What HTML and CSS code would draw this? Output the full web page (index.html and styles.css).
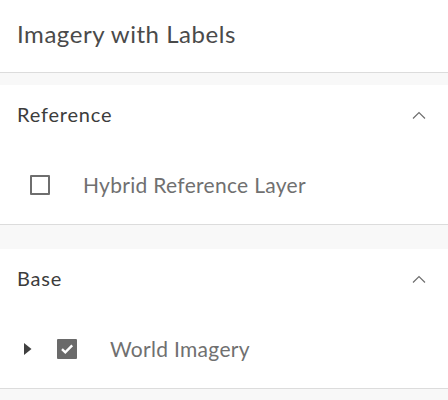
FILE: index.html
```html
<!DOCTYPE html>
<html>
<head>
<meta charset="utf-8">
<link rel="stylesheet" href="styles.css">
</head>
<body>
<div class="panel">
  <header class="title-bar">
    <h1 class="title">Imagery with Labels</h1>
  </header>
  <section class="group group-first">
    <div class="group-head">
      <span class="group-name">Reference</span>
      <svg class="chev" width="14" height="8" viewBox="0 0 14 8"><path d="M1 7.5 L7 1.5 L13 7.5" fill="none" stroke="#6e6e6e" stroke-width="1.2"/></svg>
    </div>
    <div class="layer-row">
      <span class="box"></span>
      <span class="layer-name">Hybrid Reference Layer</span>
    </div>
  </section>
  <section class="group">
    <div class="group-head">
      <span class="group-name">Base</span>
      <svg class="chev" width="14" height="8" viewBox="0 0 14 8"><path d="M1 7.5 L7 1.5 L13 7.5" fill="none" stroke="#6e6e6e" stroke-width="1.2"/></svg>
    </div>
    <div class="layer-row layer-row-nested">
      <svg class="caret" width="8" height="12" viewBox="0 0 8 12"><path d="M0 0 L7.5 6 L0 12 Z" fill="#404040"/></svg>
      <span class="box box-checked">
        <svg width="20" height="20" viewBox="0 0 20 20"><path d="M5 10.2 L8.3 13.4 L15.2 6.4" fill="none" stroke="#fff" stroke-width="2.4"/></svg>
      </span>
      <span class="layer-name">World Imagery</span>
    </div>
  </section>
</div>
</body>
</html>
```

FILE: styles.css
```css
html, body {
  margin: 0;
  padding: 0;
  background: #f8f8f8;
  font-family: Lato, "Noto Sans", sans-serif;
}
.panel {
  display: flex;
  flex-direction: column;
  width: 448px;
}
.title-bar {
  background: #fff;
  height: 72px;
  box-sizing: content-box;
  border-bottom: 1px solid #dcdcdc;
  display: flex;
  align-items: center;
  padding: 0 0 0 17px;
}
.title {
  margin: 0 0 5px 0;
  font-size: 24px;
  font-weight: 400;
  letter-spacing: 0.55px;
  color: #4a4a4a;
}
.group {
  background: #fff;
  border-bottom: 1px solid #dcdcdc;
  margin-top: 24px;
}
.group-first {
  margin-top: 12px;
}
.group-head {
  height: 60px;
  display: flex;
  align-items: center;
  justify-content: space-between;
  padding: 0 22px 0 17px;
}
.group-name {
  font-size: 20px;
  font-weight: 400;
  letter-spacing: 0.8px;
  color: #3c3c3c;
  margin-bottom: 2px;
}
.chev {
  display: block;
}
.layer-row {
  height: 79px;
  display: flex;
  align-items: center;
  padding-left: 30px;
}
.layer-row-nested {
  padding-left: 24px;
}
.caret {
  display: block;
  margin-right: 25px;
}
.box {
  width: 20px;
  height: 20px;
  box-sizing: border-box;
  border: 2px solid #6e6e6e;
  border-radius: 1px;
  margin-right: 33px;
  flex-shrink: 0;
}
.box-checked {
  background: #6a6a6a;
  border: none;
}
.box-checked svg {
  display: block;
}
.layer-name {
  font-size: 21px;
  font-weight: 400;
  letter-spacing: 0.3px;
  color: #707070;
}
```
